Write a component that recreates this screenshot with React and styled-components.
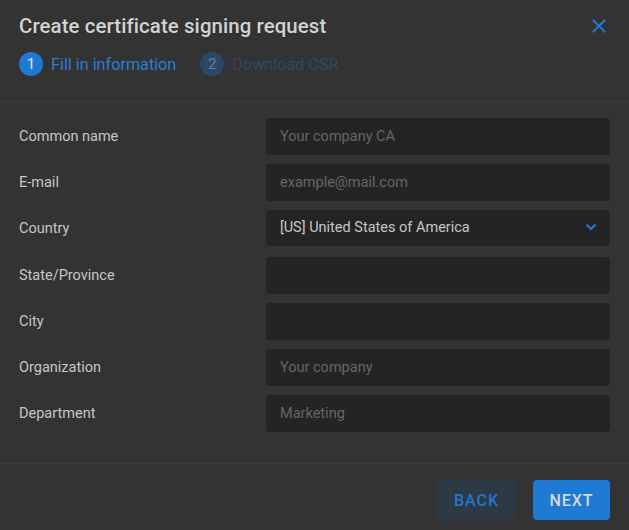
import React from 'react'
import styled, { createGlobalStyle } from 'styled-components'

const GlobalStyle = createGlobalStyle`
  html, body {
    margin: 0;
    padding: 0;
    background: #333333;
  }
  body {
    font-family: Roboto, "Noto Sans", sans-serif;
  }
`

const Dialog = styled.div`
  width: 629px;
  height: 530px;
  background: #333333;
  display: flex;
  flex-direction: column;
  box-sizing: border-box;
`

const Header = styled.div`
  padding: 12px 19px 0 19px;
  height: 102px;
  box-sizing: border-box;
  border-bottom: 1px solid #3d3d3d;
`

const TitleRow = styled.div`
  display: flex;
  align-items: center;
  justify-content: space-between;
  height: 27px;
`

const Title = styled.h1`
  margin: 0;
  font-size: 20.4px;
  font-weight: 500;
  color: #d2d2d2;
  letter-spacing: 0.1px;
`

const CloseButton = styled.button`
  background: none;
  border: none;
  padding: 0;
  margin-right: 1px;
  width: 20px;
  height: 20px;
  display: flex;
  align-items: center;
  justify-content: center;
  cursor: pointer;
`

const Steps = styled.div`
  display: flex;
  align-items: center;
  gap: 24px;
  margin-top: 13px;
`

const Step = styled.div`
  display: flex;
  align-items: center;
  gap: 8px;
`

const StepNumber = styled.span`
  width: 24px;
  height: 24px;
  border-radius: 50%;
  background: ${p => (p.$active ? '#1e78d4' : '#29496b')};
  color: ${p => (p.$active ? '#e6e6e6' : '#6f7c8a')};
  font-size: 15px;
  display: flex;
  align-items: center;
  justify-content: center;
`

const StepLabel = styled.span`
  font-size: 16.2px;
  color: ${p => (p.$active ? '#2a7fd4' : '#2b4967')};
`

const Form = styled.div`
  padding: 16px 19px 0 19px;
  display: flex;
  flex-direction: column;
  gap: 9px;
  height: 362px;
  box-sizing: border-box;
  border-bottom: 1px solid #3d3d3d;
`

const Row = styled.label`
  display: grid;
  grid-template-columns: 247px 1fr;
  align-items: center;
  margin-bottom: ${p => (p.$select ? 2 : 0)}px;
`

const Label = styled.span`
  font-size: 14.5px;
  color: #c6c6c6;
`

const Input = styled.input`
  height: 37px;
  box-sizing: border-box;
  background: #242424;
  border: none;
  border-radius: 4px;
  padding: 0 14px;
  font-family: Roboto, sans-serif;
  font-size: 14.5px;
  color: #c6c6c6;
  outline: none;
  &::placeholder {
    color: #666666;
  }
`

const SelectBox = styled.div`
  height: 36px;
  background: #242424;
  border-radius: 4px;
  padding: 0 13px 0 14px;
  display: flex;
  align-items: center;
  justify-content: space-between;
  font-size: 14.5px;
  color: #c6c6c6;
  padding-bottom: 2px;
  box-sizing: border-box;
`

const Footer = styled.div`
  display: flex;
  justify-content: flex-end;
  gap: 17px;
  padding: 16px 19px 0 19px;
`

const Button = styled.button`
  height: 40px;
  min-width: ${p => p.$w}px;
  border: none;
  border-radius: 4px;
  background: ${p => (p.$primary ? '#1f7ad3' : '#2d3945')};
  color: ${p => (p.$primary ? '#d8d8d8' : '#1f78d1')};
  font-family: Roboto, sans-serif;
  font-size: 16px;
  font-weight: 500;
  letter-spacing: 1px;
  cursor: pointer;
`

const fields = [
  { label: 'Common name', placeholder: 'Your company CA' },
  { label: 'E-mail', placeholder: 'example@mail.com' },
  { label: 'Country', select: '[US] United States of America' },
  { label: 'State/Province', placeholder: '' },
  { label: 'City', placeholder: '' },
  { label: 'Organization', placeholder: 'Your company' },
  { label: 'Department', placeholder: 'Marketing' },
]

const App = () => {
  return (
    <Dialog>
      <GlobalStyle />
      <Header>
        <TitleRow>
          <Title>Create certificate signing request</Title>
          <CloseButton aria-label="close">
            <svg width="14" height="14" viewBox="0 0 14 14">
              <path d="M1.5 1.5 L12.5 12.5 M12.5 1.5 L1.5 12.5" stroke="#1f7ad3" strokeWidth="2" strokeLinecap="square" />
            </svg>
          </CloseButton>
        </TitleRow>
        <Steps>
          <Step>
            <StepNumber $active>1</StepNumber>
            <StepLabel $active>Fill in information</StepLabel>
          </Step>
          <Step>
            <StepNumber>2</StepNumber>
            <StepLabel>Download CSR</StepLabel>
          </Step>
        </Steps>
      </Header>
      <Form>
        {fields.map(f => (
          <Row key={f.label} $select={!!f.select}>
            <Label>{f.label}</Label>
            {f.select ? (
              <SelectBox>
                {f.select}
                <svg width="12" height="8" viewBox="0 0 12 8">
                  <path d="M1.5 1.5 L6 6 L10.5 1.5" stroke="#1f7ad3" strokeWidth="2" fill="none" />
                </svg>
              </SelectBox>
            ) : (
              <Input placeholder={f.placeholder} />
            )}
          </Row>
        ))}
      </Form>
      <Footer>
        <Button $w={79}>BACK</Button>
        <Button $w={77} $primary>NEXT</Button>
      </Footer>
    </Dialog>
  )
}

export default App
